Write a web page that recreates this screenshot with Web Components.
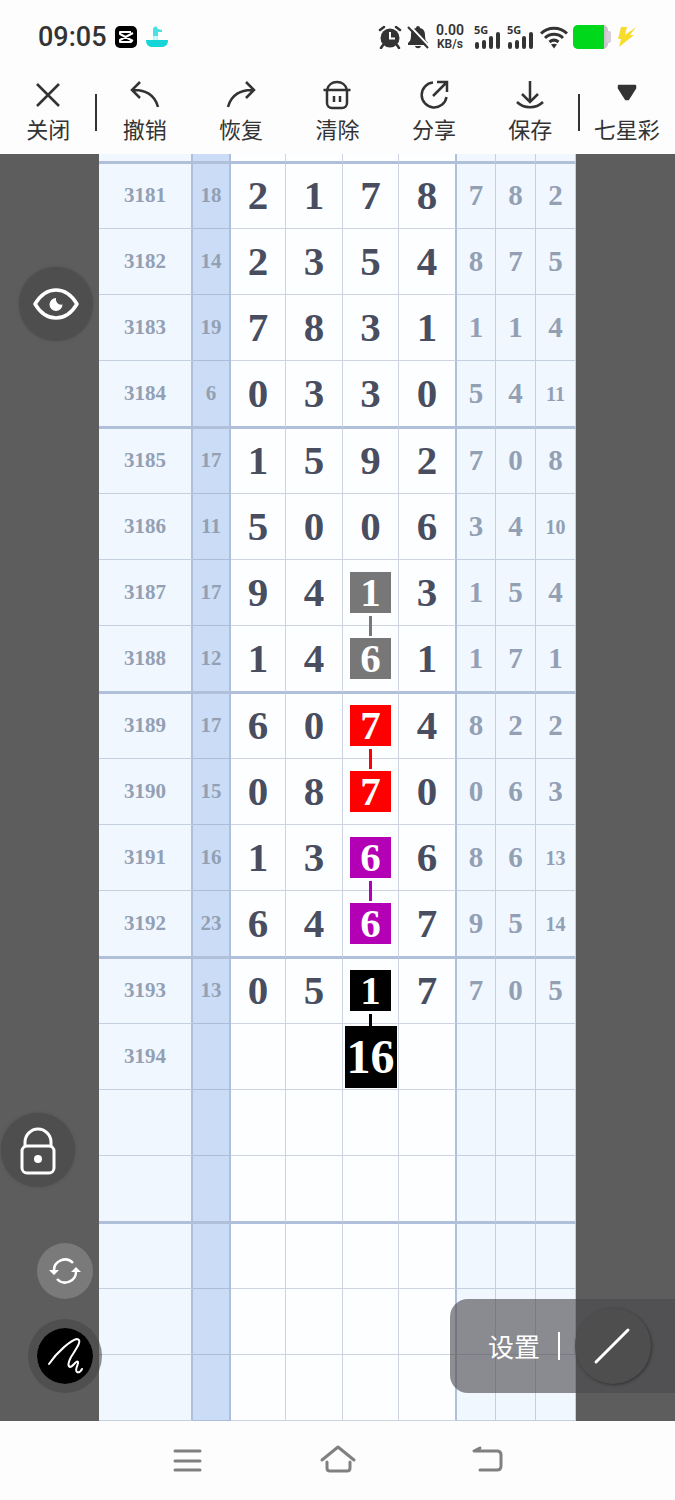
<!DOCTYPE html>
<html lang="zh-CN">
<head>
<meta charset="utf-8">
<meta name="viewport" content="width=device-width, initial-scale=1">
<title>七星彩</title>
<style>
  :root {
    --ink: #333;
    --mute: #93a0b4;
    --line-thin: rgba(110, 130, 165, 0.34);
    --line-thick: #b0bfda;
    --side: #5d5d5d;
    --tint: #f0f7ff;
    --sum: #cbddf6;
  }
  body {
    margin: 0;
    background: #fdfdfd;
    color: var(--ink);
    font-family: 'Noto Sans', 'Noto Sans CJK SC', sans-serif;
  }
</style>
</head>
<body>
<chart-app>
  <status-bar slot="status" time="09:05" speed="0.00"></status-bar>

  <tool-bar slot="tools">
    <tool-button label="关闭">
      <svg viewBox="0 0 32 32"><path d="M5 5 27 27M27 5 5 27"/></svg>
    </tool-button>
    <tool-button label="撤销" divided>
      <svg viewBox="0 0 32 32"><path d="M11 3 3 11l8 8M3 11c13-1 23 5 26 17"/></svg>
    </tool-button>
    <tool-button label="恢复">
      <svg viewBox="0 0 32 32"><path d="M21 3l8 8-8 8M29 11C16 10 6 16 3 28"/></svg>
    </tool-button>
    <tool-button label="清除">
      <svg viewBox="0 0 32 32"><path d="M2.500 11h27M6 11v13a5 5 0 0 0 5 5h10a5 5 0 0 0 5-5V11M6 11c1-5 5-8 10-8s9 3 10 8M13 17v6M19 17v6"/></svg>
    </tool-button>
    <tool-button label="分享">
      <svg viewBox="0 0 32 32"><path d="M15 3.500A12.500 12.500 0 1 0 28.500 18M15 17 28 4M19 3h10v10"/></svg>
    </tool-button>
    <tool-button label="保存">
      <svg viewBox="0 0 32 32"><path d="M16 2v20M8 15l8 8 8-8M3 23c7 7 19 7 26 0"/></svg>
    </tool-button>
    <tool-button label="七星彩" divided>
      <svg viewBox="0 0 32 32"><path fill="currentColor" stroke-linejoin="round" d="M8 7h16v2l-7 11h-2L8 9z"/></svg>
    </tool-button>
  </tool-bar>

  <trend-chart></trend-chart>

  <float-button class="eye" label="显示">
    <svg viewBox="0 0 48 48" width="48" height="48"><path fill="none" stroke="#fff" stroke-width="3.500" stroke-linejoin="round" d="M3 24C9 14 16 10 24 10s15 4 21 14c-6 10-13 14-21 14S9 34 3 24z"/><path fill="#fff" d="M24 18a6.500 6.500 0 1 0 6.500 6.500c-4 .8-7-2-6.500-6.500z"/></svg>
  </float-button>
  <float-button class="lock" label="锁定">
    <svg viewBox="0 0 48 56" width="48" height="56"><g fill="none" stroke="#fff" stroke-width="3"><rect x="8" y="24" width="32" height="27" rx="5"/><path d="M11 24v-4c0-7 6-13 13-13s13 6 13 13v4"/></g><circle cx="24" cy="37" r="4" fill="#fff"/></svg>
  </float-button>
  <float-button class="refresh" label="刷新" tone="light">
    <svg viewBox="0 0 32 32" width="32" height="32"><g fill="none" stroke="#fff" stroke-width="2.500"><path d="M5 16A11 11 0 0 1 24 8M27 16A11 11 0 0 1 8 24"/></g><path fill="#fff" d="M0 15h10L5 20zM22 17h10L27 12z"/></svg>
  </float-button>
  <float-button class="pen" label="画笔" tone="black">
    <svg viewBox="0 0 56 56" width="56" height="56"><path fill="none" stroke="#fff" stroke-width="2" stroke-linecap="round" stroke-linejoin="round" d="M12 36C20 24 34 12 40 11c6 1-1 10-6 18-2 4-4 9-1 10 3 0 6-7 8-5 1 2-4 8-1 10 2 1 4-1 5-3"/></svg>
  </float-button>
  <setting-panel>设置</setting-panel>

  <nav-bar slot="nav"></nav-bar>
</chart-app>

<script>
  // Shared base: clone a template into an open shadow root
  class BaseElement extends HTMLElement {
    constructor() {
      super();
      this.attachShadow({ mode: 'open' });
    }

    connectedCallback() {
      const template = document.createElement('template');
      template.innerHTML = this.template();
      this.shadowRoot.replaceChildren(template.content.cloneNode(true));
    }
  }

  // Page frame: bars on top and bottom, chart stage between
  class ChartApp extends BaseElement {
    template() {
      return `
        <style>
          :host { display: flex; flex-direction: column; min-height: 100vh; }
          header { background: #fdfdfd; }
          main {
            position: relative;
            padding: 0 99px;
            background: var(--side);
            overflow: hidden;
          }
          footer { flex: 1; display: grid; background: #fdfdfd; }
          /* Floating controls over the chart */
          ::slotted(.eye) { position: absolute; left: 19px; top: 113px; }
          ::slotted(.lock) { position: absolute; left: 1px; bottom: 234px; }
          ::slotted(.refresh) { position: absolute; left: 37px; bottom: 122px; }
          ::slotted(.pen) { position: absolute; left: 28px; bottom: 28px; }
          ::slotted(setting-panel) { position: absolute; right: 0; bottom: 28px; }
        </style>
        <header><slot name="status"></slot><slot name="tools"></slot></header>
        <main><slot></slot></main>
        <footer><slot name="nav"></slot></footer>
      `;
    }
  }

  class StatusBar extends BaseElement {
    template() {
      const signal = `
        <span class="signal">
          <b>5G</b>
          <svg width="26" height="17" viewBox="0 0 26 17"><path stroke="currentColor" stroke-width="4" stroke-linecap="round" d="M3 12v3M10 10v5M17 6v9M24 2v13"/></svg>
        </span>`;
      return `
        <style>
          :host {
            display: flex;
            align-items: center;
            height: 74px;
            padding: 0 38px;
            color: var(--ink);
          }
          svg { display: block; }
          .left, .right { display: flex; align-items: center; }
          .left { gap: 8px; }
          .right { gap: 5px; margin-left: auto; }
          time { font: 500 27px/32px Roboto, sans-serif; }
          .speed {
            display: grid;
            justify-items: center;
            padding: 0 5px 0 2px;
            font: 600 12px/14px Roboto, sans-serif;
          }
          .speed span { font-size: 14px; }
          .speed small { font-size: 12px; }
          .signal { display: grid; width: 28px; height: 24px; }
          .signal b, .signal svg { grid-area: 1 / 1; }
          .signal b { font-size: 11px; line-height: 10px; }
          .signal svg { align-self: end; }
        </style>
        <div class="left">
          <time>${this.getAttribute('time')}</time>
          <svg width="22" height="22" viewBox="0 0 22 22"><rect width="22" height="22" rx="5" fill="#000"/><path fill="none" stroke="#fff" stroke-width="2" stroke-linejoin="round" d="M18 7 5 14v2h11v-2L5 8V6h11M16 14l2 1"/></svg>
          <svg width="24" height="24" viewBox="0 0 24 24"><path fill="#16d5d8" d="M1 15h22c0 5-3 7-6 7H7c-3 0-6-2-6-7z"/><path fill="#4be0e4" d="M8 3l3-2 2 3 4 1v2h-4v4H8z"/><path stroke="#bdf4f5" stroke-width="2" d="M9 11v4M12 11v4"/></svg>
        </div>
        <div class="right">
          <svg width="24" height="24" viewBox="0 0 24 24"><circle cx="12" cy="13" r="9.500" fill="currentColor"/><path fill="none" stroke="currentColor" stroke-width="2.500" stroke-linecap="round" d="M2 5l4-3M22 5l-4-3M5 20l-2 3M19 20l2 3"/><path fill="none" stroke="#fff" stroke-width="2" d="M12 7v6.500h5"/></svg>
          <svg width="22" height="24" viewBox="0 0 22 24"><path fill="currentColor" d="M11 1c1 0 2 .7 2 2 4 1 5 4 5 7 0 5 1 6 3 8v2H1v-2c2-2 3-3 3-8 0-3 1-6 5-7 0-1.300 1-2 2-2zM8 21h6c-.5 3-5.500 3-6 0z"/><path stroke="#fff" stroke-width="2" d="M3 1l20 21"/><path stroke="currentColor" stroke-width="2" d="M1 2l20 21"/></svg>
          <div class="speed"><span>${this.getAttribute('speed')}</span><small>KB/s</small></div>
          ${signal}${signal}
          <svg width="28" height="24" viewBox="0 0 28 24"><g fill="none" stroke="currentColor" stroke-width="3"><path d="M1 8.500c7-7 19-7 26 0M5 13c5-5 13-5 18 0M9.500 17c3-2.500 6-2.500 9 0"/></g><path fill="currentColor" d="M11 19.500c2-1 4-1 6 0l-3 4z"/></svg>
          <svg width="39" height="24" viewBox="0 0 39 24"><rect width="35" height="24" rx="5" fill="#c9c3cd"/><rect x="33" y="6" width="5" height="12" rx="2" fill="#d6ced8"/><path fill="#00d91b" d="M5 0h26v24H5a5 5 0 0 1-5-5V5a5 5 0 0 1 5-5z"/></svg>
          <svg width="20" height="22" viewBox="0 0 20 22"><path fill="#f8dc2c" d="M4 1h6L8 9l11-8-6 8h4L2 21l2-8H1z"/></svg>
        </div>
      `;
    }
  }

  class ToolBar extends BaseElement {
    template() {
      return `
        <style>
          :host {
            display: grid;
            grid-auto-flow: column;
            grid-auto-columns: minmax(0, 1fr);
            height: 80px;
          }
        </style>
        <slot></slot>
      `;
    }
  }

  class ToolButton extends BaseElement {
    template() {
      return `
        <style>
          :host { display: flex; align-items: center; }
          /* Vertical rule before the item */
          :host([divided])::before {
            content: '';
            width: 2px;
            height: 37px;
            margin: 0 -1px 4px;
            background: var(--ink);
          }
          button {
            flex: 1;
            display: flex;
            flex-direction: column;
            align-items: center;
            gap: 2px;
            height: 100%;
            padding: 5px 0 0;
            border: 0;
            background: none;
            color: var(--ink);
            font: 22px/30px 'Noto Sans CJK SC', sans-serif;
            white-space: nowrap;
          }
          ::slotted(svg) {
            width: 32px;
            height: 32px;
            fill: none;
            stroke: currentColor;
            stroke-width: 2.5px;
          }
        </style>
        <button type="button"><slot></slot><span>${this.getAttribute('label')}</span></button>
      `;
    }
  }

  // [issue, sum, four main digits, three tail digits]
  const ROWS = [
    ['3181', 18, '2178', [7, 8, 2]],
    ['3182', 14, '2354', [8, 7, 5]],
    ['3183', 19, '7831', [1, 1, 4]],
    ['3184', 6, '0330', [5, 4, 11]],
    ['3185', 17, '1592', [7, 0, 8]],
    ['3186', 11, '5006', [3, 4, 10]],
    ['3187', 17, '9413', [1, 5, 4]],
    ['3188', 12, '1461', [1, 7, 1]],
    ['3189', 17, '6074', [8, 2, 2]],
    ['3190', 15, '0870', [0, 6, 3]],
    ['3191', 16, '1366', [8, 6, 13]],
    ['3192', 23, '6467', [9, 5, 14]],
    ['3193', 13, '0517', [7, 0, 5]],
    ['3194', '', '', []]
  ];
  const TOTAL_ROWS = 19;

  // Marks on the third digit; link draws the line to the row below
  const MARKS = {
    3187: { color: '#777', link: true },
    3188: { color: '#777' },
    3189: { color: '#f00', link: true },
    3190: { color: '#f00' },
    3191: { color: '#b400b4', link: true },
    3192: { color: '#b400b4' },
    3193: { color: '#000', link: true },
    3194: { color: '#000', big: true, text: '16' }
  };

  class TrendChart extends BaseElement {
    renderMain(issue, digits, index) {
      const mark = index === 2 && MARKS[issue];
      if (!mark) return `<td class="main">${digits[index] || ''}</td>`;
      const classes = `main${mark.link ? ' link' : ''}`;
      return `<td class="${classes}" style="--mark: ${mark.color}"><span class="mark${mark.big ? ' big' : ''}">${mark.text || digits[index]}</span></td>`;
    }

    renderRow([issue, sum, digits, tail] = ['', '', '', []]) {
      const main = [0, 1, 2, 3].map((i) => this.renderMain(issue, digits, i)).join('');
      const rest = [0, 1, 2].map((i) => {
        const value = tail[i] ?? '';
        return `<td class="tail${value > 9 ? ' small' : ''}">${value}</td>`;
      }).join('');
      return `<tr><th scope="row">${issue}</th><td class="sum">${sum}</td>${main}${rest}</tr>`;
    }

    template() {
      let groups = `<tbody class="cut">${this.renderRow()}</tbody>`;
      for (let i = 0; i < TOTAL_ROWS; i += 4) {
        let rows = '';
        for (let j = i; j < Math.min(i + 4, TOTAL_ROWS); j++) rows += this.renderRow(ROWS[j]);
        groups += `<tbody>${rows}</tbody>`;
      }
      const cols = [94, 38, 55, 57, 56, 58, 39, 40, 40].map((w) => `<col style="width: ${w}px">`).join('');
      return `
        <style>
          :host { display: block; }
          table {
            width: 100%;
            table-layout: fixed;
            border-collapse: separate;
            border-spacing: 0;
            background: #fdfeff;
            font-family: 'Liberation Serif', serif;
            font-weight: 700;
          }
          th, td {
            box-sizing: border-box;
            height: 66px;
            padding: 0;
            border: 0 solid var(--line-thin);
            border-width: 0 1px 1px 0;
            text-align: center;
            line-height: 1;
          }
          /* Every fourth row closes with a heavy rule */
          tr:first-child > * { height: 65px; padding-bottom: 2px; }
          tr:nth-child(4) > * { height: 68px; }
          .cut tr > * { height: 10px; }
          tr:nth-child(4) > *, .cut tr > * {
            border-bottom: 3px solid var(--line-thick);
          }
          th, .sum { font-size: 21px; color: var(--mute); border-right: 2px solid var(--line-thick); }
          th { background: var(--tint); }
          .sum { background: var(--sum); }
          .main { position: relative; font-size: 41px; color: #484d60; }
          .main:nth-child(6) { border-right: 2px solid var(--line-thick); }
          .tail { font-size: 29px; color: var(--mute); background: var(--tint); }
          .small { font-size: 20px; }
          .mark {
            position: relative;
            z-index: 1;
            display: grid;
            place-content: center;
            width: 41px;
            height: 41px;
            margin: 0 auto;
            background: var(--mark);
            color: #fff;
          }
          .big { width: 52px; height: 62px; font-size: 48px; }
          .link::after {
            content: '';
            position: absolute;
            z-index: 1;
            left: calc(50% - 2px);
            top: calc(100% - 9px);
            width: 3px;
            height: 20px;
            background: var(--mark);
          }
        </style>
        <table><colgroup>${cols}</colgroup>${groups}</table>
      `;
    }
  }

  class FloatButton extends BaseElement {
    template() {
      return `
        <style>
          :host { display: block; z-index: 2; }
          button {
            display: grid;
            place-items: center;
            width: 74px;
            height: 74px;
            padding: 0;
            border: 0;
            border-radius: 50%;
            background: #4e4e4e;
            box-shadow: 0 0 3px #4e4e4e;
          }
          :host([tone='light']) button {
            width: 56px;
            height: 56px;
            background: #7a7a7a;
            box-shadow: none;
          }
          :host([tone='black']) button {
            border: 9px solid rgba(70, 70, 70, 0.6);
            background: #000 padding-box;
            box-shadow: none;
          }
        </style>
        <button type="button" aria-label="${this.getAttribute('label')}"><slot></slot></button>
      `;
    }
  }

  class SettingPanel extends BaseElement {
    template() {
      return `
        <style>
          :host {
            z-index: 2;
            display: flex;
            align-items: center;
            box-sizing: border-box;
            height: 94px;
            padding: 0 24px 0 38px;
            border-radius: 18px 0 0 18px;
            background: rgba(75, 73, 77, 0.62);
          }
          button { padding: 0; border: 0; background: none; color: #fff; }
          .text {
            padding-right: 18px;
            font: 26px/36px 'Noto Sans CJK SC', sans-serif;
          }
          i { width: 2px; height: 28px; margin-right: 15px; background: #fff; }
          .line {
            display: grid;
            place-items: center;
            width: 76px;
            height: 76px;
            border-radius: 50%;
            background: #4e4e4e;
            box-shadow: 1px 1px 3px #333;
          }
        </style>
        <button type="button" class="text"><slot></slot></button>
        <i></i>
        <button type="button" class="line" aria-label="直线">
          <svg width="40" height="40" viewBox="0 0 40 40"><path stroke="#fff" stroke-width="3" stroke-linecap="round" d="M3 36 35 4"/></svg>
        </button>
      `;
    }
  }

  class NavBar extends BaseElement {
    template() {
      return `
        <style>
          :host { display: flex; align-items: center; justify-content: center; gap: 110px; }
          button { padding: 0; border: 0; background: none; color: #808080; }
          svg {
            display: block;
            width: 40px;
            height: 32px;
            fill: none;
            stroke: currentColor;
            stroke-width: 3px;
            stroke-linecap: round;
          }
        </style>
        <button type="button" aria-label="菜单"><svg viewBox="0 0 40 32"><path d="M7 6h25M7 16h25M7 25h25"/></svg></button>
        <button type="button" aria-label="主页"><svg viewBox="0 0 40 32"><path stroke-linejoin="round" d="M4 15 20 2l16 13M9 17v6q0 3 3 3h17q3 0 3-3v-6"/></svg></button>
        <button type="button" aria-label="返回"><svg viewBox="0 0 40 32"><path stroke-linejoin="round" d="M12 3 6 6h23q4 0 4 4v11q0 4-4 4H12"/></svg></button>
      `;
    }
  }

  customElements.define('chart-app', ChartApp);
  customElements.define('status-bar', StatusBar);
  customElements.define('tool-bar', ToolBar);
  customElements.define('tool-button', ToolButton);
  customElements.define('trend-chart', TrendChart);
  customElements.define('float-button', FloatButton);
  customElements.define('setting-panel', SettingPanel);
  customElements.define('nav-bar', NavBar);
</script>
</body>
</html>
